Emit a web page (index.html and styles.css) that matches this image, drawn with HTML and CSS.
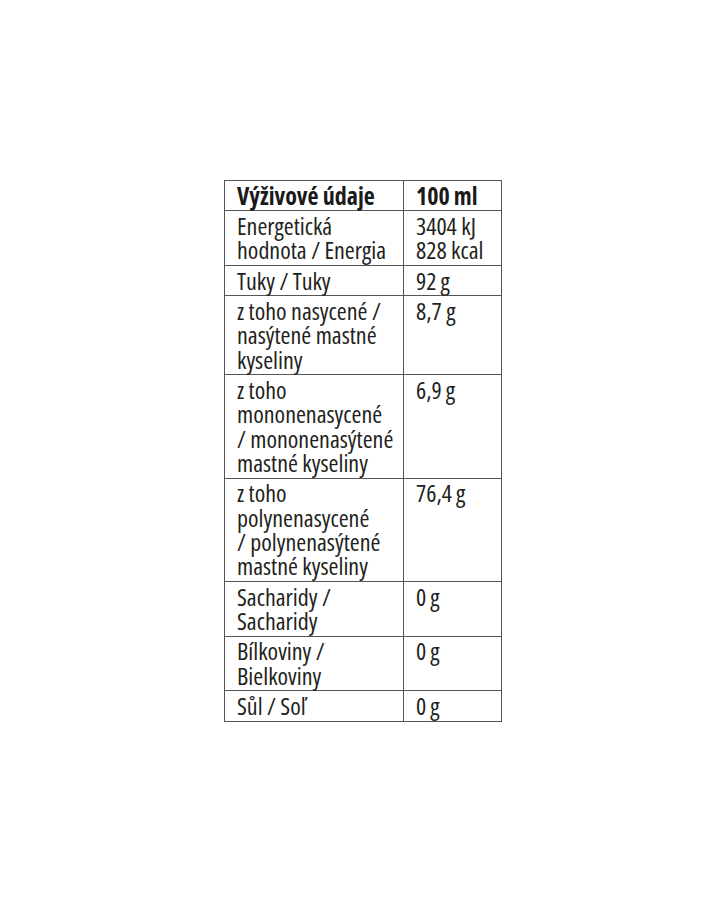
FILE: index.html
```html
<!DOCTYPE html>
<html lang="cs">
<head>
<meta charset="utf-8">
<title>Výživové údaje</title>
<link rel="stylesheet" href="styles.css">
</head>
<body>
<main class="page">
  <table class="nutrition">
    <colgroup><col class="col-name"><col class="col-value"></colgroup>
    <thead>
      <tr><th>Výživové údaje</th><th>100&#8201;ml</th></tr>
    </thead>
    <tbody>
      <tr><td>Energetická<br>hodnota / Energia</td><td>3404 kJ<br>828 kcal</td></tr>
      <tr><td>Tuky / Tuky</td><td>92&#8201;g</td></tr>
      <tr><td>z toho nasycené /<br>nasýtené mastné<br>kyseliny</td><td>8,7 g</td></tr>
      <tr><td>z toho<br>mononenasycené<br>/ mononenasýtené<br>mastné kyseliny</td><td>6,9&#8201;g</td></tr>
      <tr><td>z toho<br>polynenasycené<br>/ polynenasýtené<br>mastné kyseliny</td><td>76,4&#8201;g</td></tr>
      <tr><td>Sacharidy /<br>Sacharidy</td><td>0&#8201;g</td></tr>
      <tr><td>Bílkoviny /<br>Bielkoviny</td><td>0&#8201;g</td></tr>
      <tr><td>Sůl / Soľ</td><td>0&#8201;g</td></tr>
    </tbody>
  </table>
</main>
</body>
</html>
```
FILE: styles.css
```css
html, body {
  margin: 0;
  padding: 0;
  background: #ffffff;
}
.page {
  display: flex;
  justify-content: flex-start;
  padding: 180px 0 0 224px;
}
.nutrition {
  border-collapse: collapse;
  table-layout: fixed;
  width: 277px;
  font-family: "Open Sans", "Roboto Condensed", sans-serif;
  font-stretch: 75%;
  font-size: 24px;
  line-height: 24.4px;
  color: #231f20;
}
.col-name { width: 179px; }
.col-value { width: 98px; }
.nutrition th,
.nutrition td {
  box-sizing: border-box;
  border: 1.5px solid #555555;
  text-align: left;
  vertical-align: top;
  padding: 2.5px 2px 2.3px 12px;
  font-weight: 400;
  white-space: nowrap;
}
.nutrition th {
  font-weight: 700;
  padding-top: 2.5px;
  padding-bottom: 2.5px;
  color: #1a1a1a;
}
```
